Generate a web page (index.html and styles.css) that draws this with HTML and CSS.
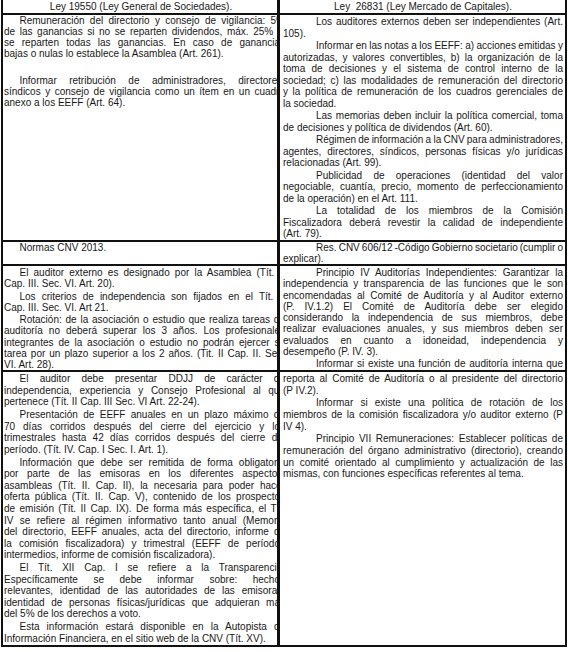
FILE: index.html
```html
<!DOCTYPE html>
<html lang="es">
<head>
<meta charset="utf-8">
<title>Cuadro normativo</title>
<link rel="stylesheet" href="styles.css">
</head>
<body>
<div class="doc">
  <div class="sheet sheet-one">
    <div class="cell left hd"><div class="txt">Ley 19550 (Ley General de Sociedades).</div></div>
    <div class="cell right hd">Ley&nbsp; 26831 (Ley Mercado de Capitales).</div>

    <div class="cell left tight">
      <div class="txt">
        <p><span class="ln">Remuneración del directorio y consejo de vigilancia: 5%</span><span class="ln">de las ganancias si no se reparten dividendos, máx. 25% si</span><span class="ln">se reparten todas las ganancias. En caso de ganancias</span><span class="ln end">bajas o nulas lo establece la Asamblea (Art. 261).</span></p>
        <p class="spaced"><span class="ln">Informar retribución de administradores, directores,</span><span class="ln">síndicos y consejo de vigilancia como un ítem en un cuadro</span><span class="ln end">anexo a los EEFF (Art. 64).</span></p>
      </div>
    </div>
    <div class="cell right dense">
      <p><span class="ln">Los auditores externos deben ser independientes (Art.</span><span class="ln end">105).</span></p>
      <p><span class="ln">Informar en las notas a los EEFF: a) acciones emitidas y</span><span class="ln">autorizadas, y valores convertibles, b) la organización de la</span><span class="ln">toma de decisiones y el sistema de control interno de la</span><span class="ln">sociedad; c) las modalidades de remuneración del directorio</span><span class="ln">y la política de remuneración de los cuadros gerenciales de</span><span class="ln end">la sociedad.</span></p>
      <p><span class="ln">Las memorias deben incluir la política comercial, toma</span><span class="ln end">de decisiones y política de dividendos (Art. 60).</span></p>
      <p><span class="ln">Régimen de información a la CNV para administradores,</span><span class="ln">agentes, directores, síndicos, personas físicas y/o jurídicas</span><span class="ln end">relacionadas (Art. 99).</span></p>
      <p><span class="ln">Publicidad de operaciones (identidad del valor</span><span class="ln">negociable, cuantía, precio, momento de perfeccionamiento</span><span class="ln end">de la operación) en el Art. 111.</span></p>
      <p><span class="ln">La totalidad de los miembros de la Comisión</span><span class="ln">Fiscalizadora deberá revestir la calidad de independiente</span><span class="ln end">(Art. 79).</span></p>
    </div>

    <div class="cell left sub"><div class="txt"><p><span class="ln end">Normas CNV 2013.</span></p></div></div>
    <div class="cell right sub">
      <p><span class="ln">Res. CNV 606/12 -Código Gobierno societario (cumplir o</span><span class="ln end">explicar).</span></p>
    </div>

    <div class="cell left snug">
      <div class="txt">
        <p><span class="ln">El auditor externo es designado por la Asamblea (Tít. II</span><span class="ln end">Cap. III. Sec. VI. Art. 20).</span></p>
        <p><span class="ln">Los criterios de independencia son fijados en el Tít. II</span><span class="ln end">Cap. III. Sec. VI. Art 21.</span></p>
        <p><span class="ln">Rotación: de la asociación o estudio que realiza tareas de</span><span class="ln">auditoría no deberá superar los 3 años. Los profesionales</span><span class="ln">integrantes de la asociación o estudio no podrán ejercer su</span><span class="ln">tarea por un plazo superior a los 2 años. (Tit. II Cap. II. Sec.</span><span class="ln end">VI. Art. 28).</span></p>
      </div>
    </div>
    <div class="cell right snug">
      <p><span class="ln">Principio IV Auditorías Independientes: Garantizar la</span><span class="ln">independencia y transparencia de las funciones que le son</span><span class="ln">encomendadas al Comité de Auditoría y al Auditor externo</span><span class="ln">(P. IV.1.2) El Comité de Auditoría debe ser elegido</span><span class="ln">considerando la independencia de sus miembros, debe</span><span class="ln">realizar evaluaciones anuales, y sus miembros deben ser</span><span class="ln">evaluados en cuanto a idoneidad, independencia y</span><span class="ln end">desempeño (P. IV. 3).</span></p>
      <p><span class="ln">Informar si existe una función de auditoría interna que</span></p>
    </div>
  </div>

  <div class="sheet sheet-two">
    <div class="cell left">
      <div class="txt">
        <p><span class="ln">El auditor debe presentar DDJJ de carácter de</span><span class="ln">independencia, experiencia y Consejo Profesional al que</span><span class="ln end">pertenece (Tít. II Cap. III Sec. VI Art. 22-24).</span></p>
        <p><span class="ln">Presentación de EEFF anuales en un plazo máximo de</span><span class="ln">70 días corridos después del cierre del ejercicio y los</span><span class="ln">trimestrales hasta 42 días corridos después del cierre del</span><span class="ln end">período. (Tít. IV. Cap. I Sec. I. Art. 1).</span></p>
        <p><span class="ln">Información que debe ser remitida de forma obligatoria</span><span class="ln">por parte de las emisoras en los diferentes aspectos:</span><span class="ln">asambleas (Tít. II. Cap. II), la necesaria para poder hacer</span><span class="ln">oferta pública (Tít. II. Cap. V), contenido de los prospectos</span><span class="ln">de emisión (Tít. II Cap. IX). De forma más específica, el Tít.</span><span class="ln">IV se refiere al régimen informativo tanto anual (Memoria</span><span class="ln">del directorio, EEFF anuales, acta del directorio, informe de</span><span class="ln">la comisión fiscalizadora) y trimestral (EEFF de períodos</span><span class="ln end">intermedios, informe de comisión fiscalizadora).</span></p>
        <p><span class="ln">El Tít. XII Cap. I se refiere a la Transparencia.</span><span class="ln">Específicamente se debe informar sobre: hechos</span><span class="ln">relevantes, identidad de las autoridades de las emisoras,</span><span class="ln">identidad de personas físicas/jurídicas que adquieran más</span><span class="ln end">del 5% de los derechos a voto.</span></p>
        <p><span class="ln">Esta información estará disponible en la Autopista de</span><span class="ln end">Información Financiera, en el sitio web de la CNV (Tít. XV).</span></p>
      </div>
    </div>
    <div class="cell right">
      <p class="cont"><span class="ln">reporta al Comité de Auditoría o al presidente del directorio</span><span class="ln end">(P IV.2).</span></p>
      <p><span class="ln">Informar si existe una política de rotación de los</span><span class="ln">miembros de la comisión fiscalizadora y/o auditor externo (P</span><span class="ln end">IV 4).</span></p>
      <p><span class="ln">Principio VII Remuneraciones: Establecer políticas de</span><span class="ln">remuneración del órgano administrativo (directorio), creando</span><span class="ln">un comité orientado al cumplimiento y actualización de las</span><span class="ln end">mismas, con funciones específicas referentes al tema.</span></p>
    </div>
  </div>
</div>
</body>
</html>
```
FILE: styles.css
```css
html, body {
  margin: 0;
  padding: 0;
  background: #ffffff;
}

body {
  font-family: "Liberation Sans", Arial, sans-serif;
  font-size: 10px;
  color: #181818;
}

.doc {
  width: 569px;
  padding-left: 1px;
}

.sheet {
  display: grid;
  grid-template-columns: 274px 285px;
  column-gap: 3px;
  row-gap: 2px;
  width: max-content;
  background: #111111;
  border-left: 2px solid #111111;
  border-right: 2px solid #111111;
  border-bottom: 2px solid #111111;
}

.sheet-one {
  grid-template-rows: 13px 225px 22px 104px;
}

.sheet-two {
  grid-template-rows: 273px;
}

.cell {
  background: #ffffff;
  line-height: 11.6px;
  padding: 1px 2px 0 3px;
  min-width: 0;
}

.cell.left {
  padding-left: 1px;
  padding-right: 0;
  overflow: hidden;
}

.cell.left .txt {
  width: 281px;
}

.cell.hd,
.cell.left.hd .txt {
  text-align: center;
  white-space: nowrap;
}

.cell.left.hd .txt {
  width: 274px;
}

p {
  margin: 0;
}

p + p {
  margin-top: 1.2px;
}

.ln {
  display: block;
  white-space: nowrap;
  word-spacing: -0.8px;
  text-align: justify;
  text-align-last: justify;
}

.ln.end {
  text-align-last: left;
  word-spacing: 0;
}

.right p > .ln:first-child {
  text-indent: 33px;
}

.right p.cont > .ln:first-child {
  text-indent: 0;
}

.left p > .ln:first-child {
  text-indent: 15.5px;
}

.cell.tight {
  line-height: 10.9px;
}

.cell.tight p.spaced {
  margin-top: 16.4px;
}

.cell.dense {
  line-height: 11.5px;
}

.cell.dense p + p {
  margin-top: 1px;
}

.cell.sub {
  line-height: 11.2px;
  padding-top: 0;
}

.cell.snug {
  line-height: 11.3px;
}

.cell.snug p + p {
  margin-top: 1px;
}
```
